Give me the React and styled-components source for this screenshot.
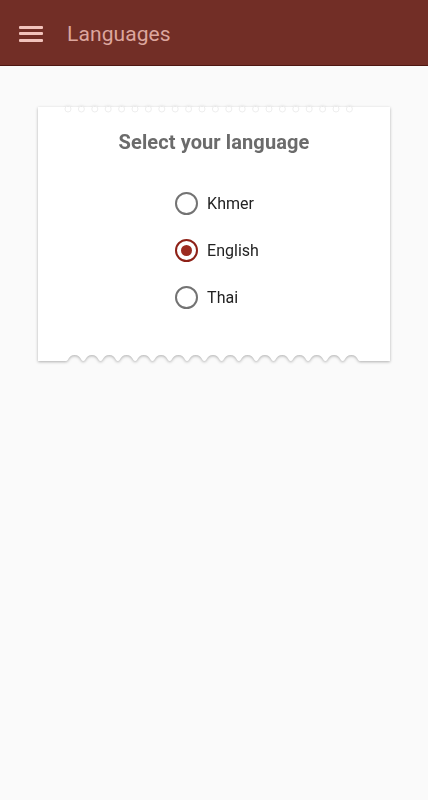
import React, { useState } from "react";
import styled, { createGlobalStyle } from "styled-components";

const Global = createGlobalStyle`
  html, body { margin: 0; padding: 0; background: #fafafa; }
  body { font-family: Roboto, "Noto Sans", Arial, sans-serif; }
  * { box-sizing: border-box; }
`;

const Page = styled.div`
  min-height: 800px;
  background: #fafafa;
  display: flex;
  flex-direction: column;
`;

const AppBar = styled.header`
  height: 66px;
  background: #722e26;
  border-bottom: 1px solid #4e1711;
  display: flex;
  align-items: center;
  padding: 3px 0 0 19px;
  gap: 24px;
`;

const MenuButton = styled.div`
  width: 24px;
  display: flex;
  flex-direction: column;
  gap: 3.5px;
  margin-top: -1px;
`;

const MenuLine = styled.span`
  display: block;
  height: 3px;
  background: #f2c3bc;
  border-radius: 1px;
`;

const Title = styled.h1`
  margin: 0;
  font-size: 21px;
  font-weight: 400;
  color: #dca69e;
  letter-spacing: 0.1px;
`;

const Content = styled.main`
  padding: 41px 38px 0 38px;
`;

const Card = styled.section`
  position: relative;
  display: flex;
  flex-direction: column;
  filter: drop-shadow(0 1.5px 1.5px rgba(0, 0, 0, 0.3));
`;

const CardBody = styled.div`
  background: #fff;
  padding: 23px 0 43px;
  display: flex;
  flex-direction: column;
  align-items: center;
`;

const Holes = styled.svg`
  position: absolute;
  top: -2px;
  left: 26px;
`;

const Heading = styled.h2`
  margin: 0 0 38px;
  font-size: 20px;
  font-weight: 700;
  color: #6b6b6b;
  letter-spacing: 0.1px;
`;

const Group = styled.div`
  display: flex;
  flex-direction: column;
  gap: 24px;
  margin-left: 6px;
`;

const Option = styled.label`
  display: flex;
  align-items: center;
  gap: 9px;
  cursor: pointer;
  font-size: 16px;
  color: #222;
`;

const Radio = styled.span`
  width: 23px;
  height: 23px;
  border-radius: 50%;
  border: 2.3px solid ${(p) => (p.$checked ? "#8e2117" : "#737373")};
  display: flex;
  align-items: center;
  justify-content: center;
  &::after {
    content: "";
    width: 11px;
    height: 11px;
    border-radius: 50%;
    background: ${(p) => (p.$checked ? "#9c2b20" : "transparent")};
  }
`;

const Edge = styled.svg`
  display: block;
  margin-top: -1px;
`;

function BottomEdge() {
  const w = 352;
  const start = 28;
  const end = 322;
  const n = 17;
  const period = (end - start) / n;
  const base = 10;
  const h = 6;
  let d = `M0 0 L${w} 0 L${w} ${base} L${end} ${base}`;
  for (let i = n - 1; i >= 0; i--) {
    const x1 = start + i * period;
    const mid = x1 + period / 2;
    const x2 = x1 + period;
    d += ` C${x2 - 3} ${base} ${x2 - 2} ${base - h} ${mid} ${base - h}`;
    d += ` C${x1 + 2} ${base - h} ${x1 + 3} ${base} ${x1} ${base}`;
  }
  d += ` L0 ${base} Z`;
  return (
    <Edge width={w} height={base + 1} viewBox={`0 0 ${w} ${base + 1}`}>
      <path d={d} fill="#fff" />
    </Edge>
  );
}

function TopHoles() {
  const circles = [];
  const n = 22;
  const period = 13.4;
  for (let i = 0; i < n; i++) {
    circles.push(
      <circle key={i} cx={4 + i * period} cy={4} r={3} fill="none" stroke="#eeeeee" strokeWidth="1" />
    );
  }
  return (
    <Holes width={300} height={8} viewBox="0 0 300 8">
      {circles}
    </Holes>
  );
}

const languages = ["Khmer", "English", "Thai"];

export default function App() {
  const [lang, setLang] = useState("English");
  return (
    <Page>
      <Global />
      <AppBar>
        <MenuButton>
          <MenuLine />
          <MenuLine />
          <MenuLine />
        </MenuButton>
        <Title>Languages</Title>
      </AppBar>
      <Content>
        <Card>
          <CardBody>
            <Heading>Select your language</Heading>
            <Group>
              {languages.map((l) => (
                <Option key={l} onClick={() => setLang(l)}>
                  <Radio $checked={lang === l} />
                  {l}
                </Option>
              ))}
            </Group>
          </CardBody>
          <BottomEdge />
          <TopHoles />
        </Card>
      </Content>
    </Page>
  );
}
